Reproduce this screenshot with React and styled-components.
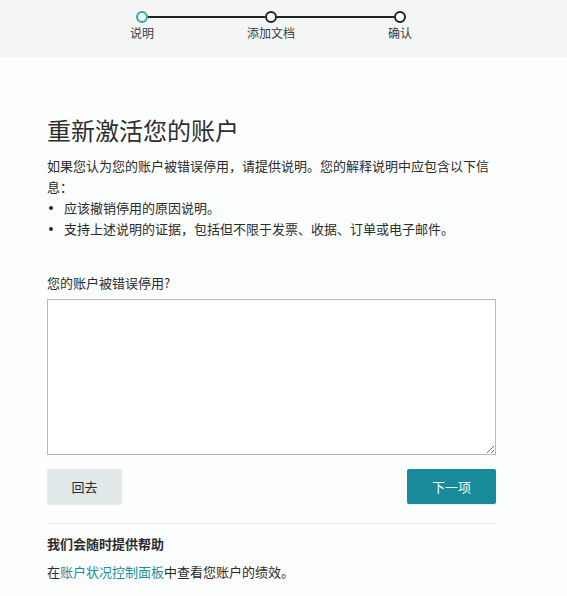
import React from "react";
import styled, { createGlobalStyle } from "styled-components";

const GlobalStyle = createGlobalStyle`
  body {
    margin: 0;
    background: #fcfdfd;
    font-family: "Noto Sans CJK SC", "Noto Sans", sans-serif;
    color: #2b2b2b;
  }
`;

const Header = styled.div`
  height: 57px;
  box-sizing: border-box;
  padding-top: 11px;
  background: #f4f6f6;
`;

const Stepper = styled.div`
  display: flex;
  width: 270px;
  margin-left: 136px;
`;

const Step = styled.div`
  display: flex;
  flex-direction: column;
  align-items: center;
  width: 12px;
  flex-shrink: 0;
`;

const Dot = styled.span`
  box-sizing: border-box;
  width: 12px;
  height: 12px;
  border-radius: 50%;
  border: 2px solid ${(p) => (p.$active ? "#3aa6a3" : "#1f2326")};
  background: ${(p) => (p.$active ? "#eaf6f5" : "#fff")};
`;

const StepLabel = styled.span`
  margin-top: 2px;
  font-size: 12px;
  line-height: 16px;
  white-space: nowrap;
  color: #3a3a3a;
`;

const Connector = styled.span`
  flex: 1;
  height: 2px;
  margin-top: 5px;
  background: #1f2326;
`;

const Main = styled.main`
  width: 449px;
  padding: 57px 0 0 47px;
`;

const Title = styled.h1`
  margin: 0 0 10px;
  font-size: 24px;
  line-height: 31px;
  font-weight: 400;
  color: #2e2e2e;
`;

const Text = styled.p`
  margin: 0;
  font-size: 13px;
  line-height: 21px;
  font-weight: ${(p) => (p.$bold ? 700 : 400)};
`;

const List = styled.ul`
  list-style: none;
  margin: 0;
  padding: 0;
`;

const Item = styled.li`
  display: flex;
  align-items: center;
  font-size: 13px;
  line-height: 21px;

  &::before {
    content: "";
    width: 4px;
    height: 4px;
    border-radius: 50%;
    background: #2b2b2b;
    margin: 0 11px 0 2px;
    flex-shrink: 0;
  }
`;

const Label = styled.label`
  display: block;
  margin-top: 33px;
  font-size: 13px;
  line-height: 21px;
`;

const Area = styled.textarea`
  display: block;
  box-sizing: border-box;
  width: 449px;
  height: 156px;
  margin-top: 6px;
  border: 1px solid #b8b8b8;
  border-radius: 0;
  background: #fff;
  font: inherit;
`;

const Actions = styled.div`
  display: flex;
  justify-content: space-between;
  margin-top: 14px;
`;

const Button = styled.button`
  height: 35px;
  border: none;
  border-radius: 2px;
  font-family: inherit;
  font-size: 13px;
  padding: 0;
  width: ${(p) => (p.$primary ? "89px" : "75px")};
  background: ${(p) => (p.$primary ? "#178a9b" : "#e2e9eb")};
  color: ${(p) => (p.$primary ? "#fff" : "#2b2b2b")};
  box-shadow: 0 1px 1px rgba(0, 0, 0, 0.08);
`;

const Divider = styled.hr`
  margin: 19px 0 9px;
  border: none;
  border-top: 1px solid #e3e6e7;
`;

const Help = styled.div`
  display: flex;
  flex-direction: column;
  gap: 7px;
`;

const Link = styled.a`
  color: #1e8e9c;
  text-decoration: none;
`;

const steps = ["说明", "添加文档", "确认"];

export default function App() {
  return (
    <>
      <GlobalStyle />
      <Header>
        <Stepper>
          {steps.map((s, i) => (
            <React.Fragment key={s}>
              {i > 0 && <Connector />}
              <Step>
                <Dot $active={i === 0} />
                <StepLabel>{s}</StepLabel>
              </Step>
            </React.Fragment>
          ))}
        </Stepper>
      </Header>
      <Main>
        <Title>重新激活您的账户</Title>
        <Text>
          如果您认为您的账户被错误停用，请提供说明。您的解释说明中应包含以下信息：
        </Text>
        <List>
          <Item>应该撤销停用的原因说明。</Item>
          <Item>支持上述说明的证据，包括但不限于发票、收据、订单或电子邮件。</Item>
        </List>
        <Label htmlFor="reason">您的账户被错误停用?</Label>
        <Area id="reason" />
        <Actions>
          <Button>回去</Button>
          <Button $primary>下一项</Button>
        </Actions>
        <Divider />
        <Help>
          <Text $bold>我们会随时提供帮助</Text>
          <Text>
            在<Link href="#">账户状况控制面板</Link>中查看您账户的绩效。
          </Text>
        </Help>
      </Main>
    </>
  );
}
